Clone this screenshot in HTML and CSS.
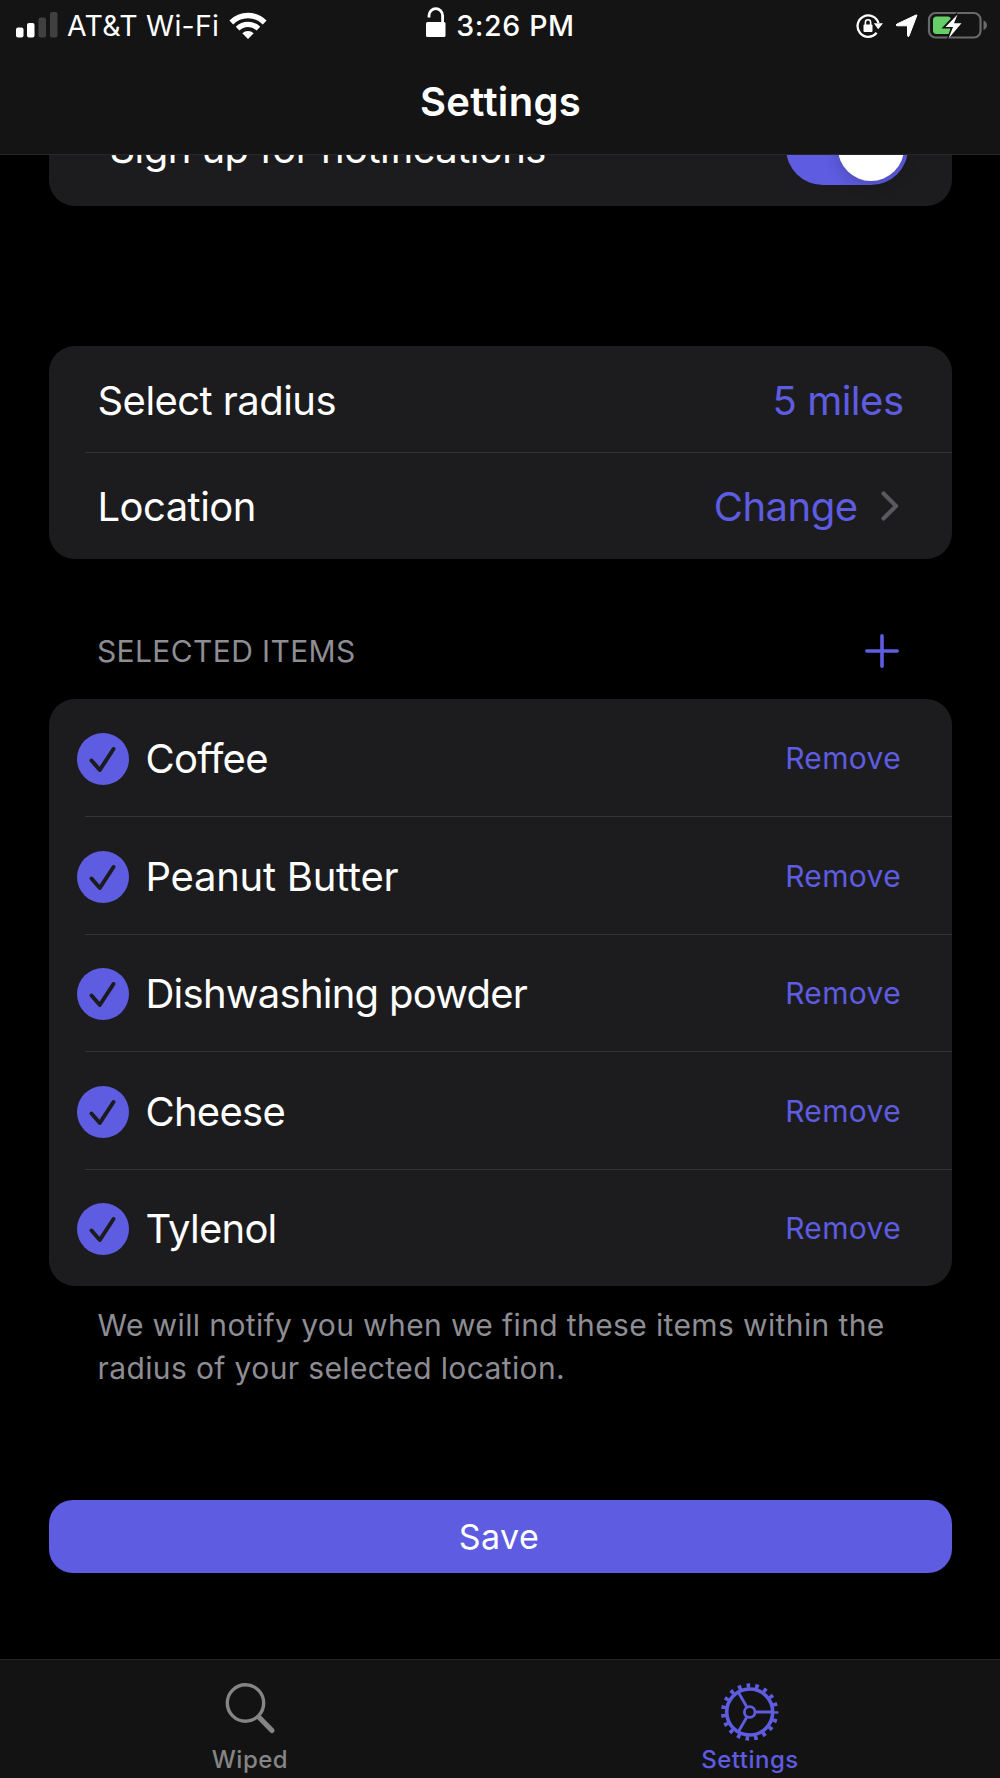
FILE: index.html
```html
<!DOCTYPE html>
<html lang="en">
<head>
<meta charset="utf-8">
<title>Settings</title>
<link rel="stylesheet" href="styles.css">
</head>
<body>
<div class="screen">
  <header class="navbar">
    <div class="status">
      <div class="status-left">
        <svg class="signal" width="42" height="27" viewBox="0 0 42 27"><rect x="0" y="16.500" width="7.500" height="10" rx="2" fill="#fff"/><rect x="11" y="12" width="7.500" height="14.500" rx="2" fill="#fff"/><rect x="22.500" y="6.500" width="7.500" height="20" rx="2" fill="#404041"/><rect x="34" y="1" width="7.500" height="25.500" rx="2" fill="#404041"/></svg>
        <span class="carrier">AT&amp;T Wi-Fi</span>
        <svg class="wifi" width="38" height="30" viewBox="0 0 38 30" fill="none" stroke="#fff"><path d="M2.300 11.500a23.500 23.500 0 0 1 33.400 0" stroke-width="5.400"/><path d="M8.600 17.700a14.800 14.800 0 0 1 20.800 0" stroke-width="5.200"/><path d="M13.300 22.300a8.300 8.300 0 0 1 11.400 0L19 28z" fill="#fff" stroke="none"/></svg>
      </div>
      <div class="status-center">
        <svg class="unlock" width="22" height="32" viewBox="0 0 22 32"><rect x="1" y="15" width="19.500" height="15" rx="1.500" fill="#fff"/><path d="M4 10.500V8.500a6.800 6.800 0 0 1 13.600 0V16" fill="none" stroke="#fff" stroke-width="2.800"/></svg>
        <span class="time">3:26 PM</span>
      </div>
      <div class="status-right">
        <svg class="rotation" width="28" height="26" viewBox="0 0 28 26"><path d="M20.600 19.800A10.700 10.700 0 1 1 22.500 10" fill="none" stroke="#fff" stroke-width="2.300"/><path d="M17.800 10.300h9.200l-4.800 6z" fill="#fff"/><rect x="7.500" y="11.500" width="9" height="7.500" rx="1" fill="#fff"/><path d="M9.400 12V9.300a2.600 2.600 0 0 1 5.200 0V12" fill="none" stroke="#fff" stroke-width="1.600"/></svg>
        <svg class="locate" width="24" height="24" viewBox="0 0 24 24"><path d="M21.800 1.600 14 22Q13 23.500 12.500 21.500V11.800H2Q0 11 2 10L21 1Q22.300 .7 21.800 1.600Z" fill="#fff" stroke="#fff" stroke-linejoin="round"/></svg>
        <svg class="battery" width="60" height="30" viewBox="0 0 60 30"><rect x="2" y="2" width="51.500" height="24.500" rx="6.500" fill="none" stroke="#69696a" stroke-width="2.200"/><path d="M56.500 9.500q3.500 1.500 3.500 4.800t-3.500 4.800z" fill="#69696a"/><rect x="6" y="5.500" width="18" height="17.500" rx="3.500" fill="#66cf68"/><path d="M31 0 14.500 17.500h9l-4 12 17-17h-9l3-12z" fill="#131313"/><path d="M30.500 3.500 18.500 16h7.500L21.500 27.500 34.500 12.300H27z" fill="#fff"/></svg>
      </div>
    </div>
    <h1 class="title">Settings</h1>
  </header>

  <main class="content">
    <section class="card card-notify">
      <div class="row">
        <span class="label notify">Sign up for notifications</span>
        <span class="toggle"><span class="knob"></span></span>
      </div>
    </section>

    <section class="card card-place">
      <div class="row"><span class="label">Select radius</span><span class="value">5 miles</span></div>
      <div class="row row-link"><span class="label">Location</span><span class="value">Change</span>
        <svg class="chevron" width="22" height="34" viewBox="0 0 22 34"><path d="M4.500 4.500 17 17 4.500 29.500" fill="none" stroke="#5a5a5e" stroke-width="4.200" stroke-linecap="round" stroke-linejoin="round"/></svg></div>
    </section>

    <div class="section-head">
      <h2 class="caption">SELECTED ITEMS</h2>
      <svg class="plus" width="34" height="34" viewBox="0 0 34 34"><path d="M17 1.800v30.400M1.800 17h30.400" stroke="#5e5ce0" stroke-width="3.600" stroke-linecap="round"/></svg>
    </div>

    <section class="card card-items">
      <div class="row"><svg class="check" viewBox="0 0 52 52"><circle cx="26" cy="26" r="26"/><path d="M14.500 27.500 22.800 37 36.500 16"/></svg><span class="label">Coffee</span><span class="remove">Remove</span></div>
      <div class="row"><svg class="check" viewBox="0 0 52 52"><circle cx="26" cy="26" r="26"/><path d="M14.500 27.500 22.800 37 36.500 16"/></svg><span class="label loose">Peanut Butter</span><span class="remove">Remove</span></div>
      <div class="row"><svg class="check" viewBox="0 0 52 52"><circle cx="26" cy="26" r="26"/><path d="M14.500 27.500 22.800 37 36.500 16"/></svg><span class="label">Dishwashing powder</span><span class="remove">Remove</span></div>
      <div class="row"><svg class="check" viewBox="0 0 52 52"><circle cx="26" cy="26" r="26"/><path d="M14.500 27.500 22.800 37 36.500 16"/></svg><span class="label">Cheese</span><span class="remove">Remove</span></div>
      <div class="row"><svg class="check" viewBox="0 0 52 52"><circle cx="26" cy="26" r="26"/><path d="M14.500 27.500 22.800 37 36.500 16"/></svg><span class="label">Tylenol</span><span class="remove">Remove</span></div>
    </section>

    <p class="note">We will notify you when we find these items within the<br>radius of your selected location.</p>

    <button class="save">Save</button>
  </main>

  <nav class="tabbar">
    <a class="tab">
      <svg class="tab-icon" width="60" height="60" viewBox="0 0 60 60" fill="none" stroke="#858585"><circle cx="25.500" cy="21" r="18.200" stroke-width="3.400"/><path d="M39 35.200 52 48.500" stroke-width="5.200" stroke-linecap="round"/></svg>
      <span>Wiped</span>
    </a>
    <a class="tab active">
      <svg class="tab-icon" width="60" height="60" viewBox="0 0 60 60" fill="none" stroke="#5e5ce0"><circle cx="29.700" cy="30" r="23" stroke-width="3.600"/><circle cx="29.700" cy="30" r="26.500" stroke-width="4.400" stroke-dasharray="3.600 5.163" stroke-dashoffset="1.800"/><circle cx="29.700" cy="30" r="5.300" stroke-width="2.800"/><path d="M35.700 30h17M26.700 24.800 18.200 10M26.700 35.200 18.200 50" stroke-width="2.800"/></svg>
      <span>Settings</span>
    </a>
  </nav>
</div>
</body>
</html>
```
FILE: styles.css
```css
* { box-sizing: border-box; }
body { margin: 0; background: #000; color: #fff; font-family: Inter, "Liberation Sans", sans-serif; }
svg { display: block; flex: none; }
.screen { display: flex; flex-direction: column; height: 1778px; overflow: hidden; }

.navbar { flex: none; height: 155px; background: #141414; border-bottom: 1px solid #272728; }
.status { display: grid; grid-template-columns: 1fr auto 1fr; height: 50px; padding: 0 13px 0 16px; font-size: 28.5px; line-height: 50px; }
.status-left, .status-center, .status-right { display: flex; align-items: center; white-space: nowrap; }
.status-right { justify-content: flex-end; }
.signal { margin: 0 9px 3px 0; }
.carrier { letter-spacing: .25px; margin-top: 1px; }
.wifi { margin-left: 10px; }
.unlock { margin: 0 9px 6px 0; }
.time { font-weight: 500; letter-spacing: .65px; margin: 1px 3px 0 0; }
.rotation { margin-right: 11px; }
.locate { margin-right: 8px; }
.title { margin: 0; padding-left: 1px; text-align: center; font-size: 40px; line-height: 104px; font-weight: 600; letter-spacing: .3px; }

.content { flex: 1; min-height: 0; overflow: hidden; padding: 0 48.500px; }
.card { background: #1c1c1e; border-radius: 26px; overflow: hidden; }
.row { display: flex; align-items: center; position: relative; padding: 2px 48px 0 49px; font-size: 40px; white-space: nowrap; }
.row + .row::before { content: ""; position: absolute; top: 0; left: 36.500px; right: 0; height: 1px; background: #353538; }
.label { flex: 1; letter-spacing: -.55px; }
.card-notify { height: 118px; margin-top: -67px; }
.card-notify .row { height: 118px; padding-right: 44px; }
.notify { padding-left: 12px; }
.toggle { width: 122px; height: 74px; padding: 4px; border-radius: 37px; background: #5e5ce0; display: flex; justify-content: flex-end; }
.knob { width: 66px; height: 66px; border-radius: 50%; background: #fff; box-shadow: 0 3px 16px rgba(0,0,0,.2); }
.card-place { margin-top: 140px; height: 212.500px; }
.card-place .row { height: 106.250px; }
.card-place .row-link { padding-right: 51px; }
.value { color: #5e5ce0; letter-spacing: -.5px; }
.chevron { margin-left: 21px; }

.section-head { display: flex; align-items: center; justify-content: space-between; height: 140.250px; padding: 45px 53px 0 48.500px; }
.caption { margin: 0; font-size: 30px; font-weight: 400; letter-spacing: .37px; color: #8d8d93; }

.card-items .row { height: 117.500px; padding: 3px 50.500px 0 28.500px; }
.card-items .label { margin-top: -1px; letter-spacing: -.75px; }
.card-items .loose { letter-spacing: -.26px; }
.check { width: 52px; height: 52px; margin-right: 16.500px; }
.check circle { fill: #5e5ce0; }
.check path { fill: none; stroke: #1c1c1e; stroke-width: 4; stroke-linecap: round; stroke-linejoin: round; }
.remove { margin-top: -2px; font-size: 30px; letter-spacing: .34px; color: #5e5ce0; }
.note { margin: 18px 0 0 49px; font-size: 30px; line-height: 42.500px; letter-spacing: .38px; color: #8d8d93; white-space: nowrap; }
.save { display: block; width: 100%; height: 73px; margin-top: 111px; padding: 0 2px 0 0; border: 0; border-radius: 24px; background: #5e5ce0; color: #fff; font: 400 34px/73px Inter, "Liberation Sans", sans-serif; letter-spacing: .5px; }

.tabbar { flex: none; display: grid; grid-template-columns: 1fr 1fr; height: 119px; background: #131313; border-top: 1px solid #262627; }
.tab { display: flex; flex-direction: column; align-items: center; gap: 3px; padding-top: 22px; font-size: 24px; font-weight: 500; line-height: 30px; letter-spacing: .5px; color: #858585; }
.active { color: #5e5ce0; }
```
